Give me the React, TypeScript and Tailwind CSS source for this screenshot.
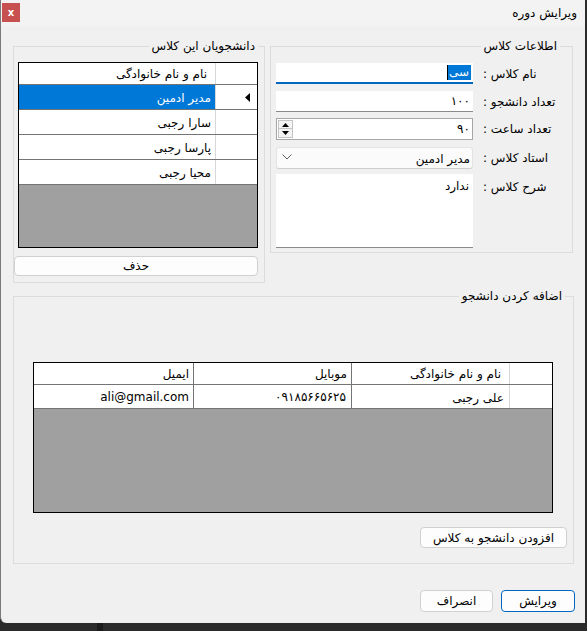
import React from "react";

type Cell = { text: string; w: string; pad: string; extra?: string };

function UpTri() {
  return (
    <svg width="7" height="4" viewBox="0 0 7 4" className="block">
      <polygon points="3.5,0 7,4 0,4" fill="#000" />
    </svg>
  );
}

function DownTri() {
  return (
    <svg width="7" height="4" viewBox="0 0 7 4" className="block">
      <polygon points="0,0 7,0 3.5,4" fill="#000" />
    </svg>
  );
}

function RowArrow() {
  return (
    <svg width="5" height="9" viewBox="0 0 5 9" className="block">
      <polygon points="5,0 5,9 0,4.5" fill="#000" />
    </svg>
  );
}

function Chevron() {
  return (
    <svg width="10" height="6" viewBox="0 0 10 6" className="block">
      <polyline points="0.5,0.5 5,5 9.5,0.5" fill="none" stroke="#5f5f5f" strokeWidth="1" />
    </svg>
  );
}

const students = ["مدیر ادمین", "سارا رجبی", "پارسا رجبی", "محیا رجبی"];

function ClassStudents() {
  return (
    <div className="relative w-[252px] h-[237px] border border-[#dcdcdc] flex flex-col">
      <span
        dir="rtl"
        className="absolute top-[-9px] right-[6px] bg-[#f0f0f0] px-[3px] leading-[16px] whitespace-nowrap"
      >
        دانشجویان این کلاس
      </span>
      <div className="ml-[4px] mt-[15px] w-[240px] h-[186px] border border-black bg-[#a0a0a0] flex flex-col">
        <div className="flex h-[22px] bg-white border-b border-[#747474]">
          <div dir="rtl" className="w-[197px] border-r border-[#d8d8d8] pr-[8px] flex items-center leading-none">
            نام و نام خانوادگی
          </div>
          <div className="w-[40px]" />
        </div>
        {students.map((s, i) => (
          <div key={s} className="flex h-[25px] bg-white border-b border-[#747474]">
            <div
              dir="rtl"
              className={
                i === 0
                  ? "w-[197px] border-r border-[#d8d8d8] pr-[4px] pt-[2px] flex items-center leading-none bg-[#0078d7] text-white"
                  : "w-[197px] border-r border-[#d8d8d8] pr-[4px] pt-[2px] flex items-center leading-none"
              }
            >
              {s}
            </div>
            <div className="w-[40px] flex items-center justify-end pr-[6px]">
              {i === 0 ? <RowArrow /> : null}
            </div>
          </div>
        ))}
      </div>
      <button className="mt-[8px] w-[244px] h-[20px] bg-[#fdfdfd] border border-[#d0d0d0] rounded-[4px] leading-none">
        حذف
      </button>
    </div>
  );
}

function FieldLabel({ children, top }: { children: React.ReactNode; top?: boolean }) {
  return (
    <div className={top ? "ml-[10px] pt-[4px] whitespace-nowrap" : "ml-[10px] flex items-center whitespace-nowrap"}>
      <span dir="rtl">{children}</span>
    </div>
  );
}

function ClassInfo() {
  return (
    <div className="relative w-[303px] h-[207px] border border-[#dcdcdc] flex flex-col">
      <span
        dir="rtl"
        className="absolute top-[-9px] right-[12px] bg-[#f0f0f0] px-[3px] leading-[16px] whitespace-nowrap"
      >
        اطلاعات کلاس
      </span>
      <div className="ml-[5px] mt-[16px] flex flex-col">
        <div className="flex h-[21px]">
          <div className="w-[197px] h-[21px] bg-white border-b-2 border-[#0067c0] flex items-center justify-end pr-[2px]">
            <span className="w-[1px] h-[15px] bg-black" />
            <span dir="rtl" className="w-[23px] bg-[#0078d7] text-white leading-[15px] h-[15px] pr-[2px]">
              سی
            </span>
          </div>
          <FieldLabel>نام کلاس :</FieldLabel>
        </div>
        <div className="flex h-[21px] mt-[7px]">
          <div dir="rtl" className="w-[197px] h-[21px] bg-white border-b border-[#8a8a8a] flex items-center pr-[3px] leading-none">
            ۱۰۰
          </div>
          <FieldLabel>تعداد دانشجو :</FieldLabel>
        </div>
        <div className="flex h-[22px] mt-[6px]">
          <div className="w-[197px] h-[22px] bg-white border border-[#a6a6a6] flex items-center justify-between">
            <div className="ml-[1px] w-[15px] h-[18px] flex flex-col">
              <div className="h-[9px] bg-[#f4f4f4] border border-[#c4c4c4] flex items-center justify-center">
                <UpTri />
              </div>
              <div className="h-[9px] bg-[#f4f4f4] border border-[#c4c4c4] border-t-0 flex items-center justify-center">
                <DownTri />
              </div>
            </div>
            <span dir="rtl" className="pr-[2px] leading-none">
              ۹۰
            </span>
          </div>
          <FieldLabel>تعداد ساعت :</FieldLabel>
        </div>
        <div className="flex h-[22px] mt-[7px]">
          <div className="w-[197px] h-[22px] bg-[#fbfbfb] border border-[#e3e3e3] border-b-[#cfcfcf] rounded-[3px] flex items-center justify-between">
            <div className="ml-[5px] mt-[-3px]">
              <Chevron />
            </div>
            <span dir="rtl" className="pr-[2px] leading-none mt-[2px]">
              مدیر ادمین
            </span>
          </div>
          <FieldLabel>استاد کلاس :</FieldLabel>
        </div>
        <div className="flex h-[74px] mt-[5px]">
          <div dir="rtl" className="w-[197px] h-[74px] bg-white border-b border-[#8a8a8a] pr-[4px] pt-[5px] leading-[14px]">
            ندارد
          </div>
          <FieldLabel top>شرح کلاس :</FieldLabel>
        </div>
      </div>
    </div>
  );
}

const headCells: Cell[] = [
  { text: "ایمیل", w: "w-[160px]", pad: "pr-[4px]" },
  { text: "موبایل", w: "w-[158px]", pad: "pr-[4px]" },
  { text: "نام و نام خانوادگی", w: "w-[158px]", pad: "pr-[8px]" },
];

const dataCells: Cell[] = [
  { text: "ali@gmail.com", w: "w-[160px]", pad: "pr-[4px]" },
  { text: "۰۹۱۸۵۶۶۵۶۲۵", w: "w-[158px]", pad: "pr-[5px]" },
  { text: "علی رجبی", w: "w-[158px]", pad: "pr-[5px]", extra: "pt-[3px]" },
];

function TableRow({ cells, h }: { cells: Cell[]; h: string }) {
  return (
    <div className={`flex ${h} bg-white border-b border-[#747474]`}>
      <div dir="rtl" className={`${cells[0].w} ${cells[0].pad} border-r border-[#747474] flex items-center leading-none`}>
        {cells[0].text}
      </div>
      <div dir="rtl" className={`${cells[1].w} ${cells[1].pad} border-r border-[#747474] flex items-center leading-none`}>
        {cells[1].text}
      </div>
      <div
        dir="rtl"
        className={`${cells[2].w} ${cells[2].pad} ${cells[2].extra ?? ""} border-r border-[#d8d8d8] flex items-center leading-none`}
      >
        {cells[2].text}
      </div>
      <div className="w-[39px]" />
    </div>
  );
}

function AddStudent() {
  return (
    <div className="relative w-[561px] h-[268px] border border-[#dcdcdc] flex flex-col">
      <span
        dir="rtl"
        className="absolute top-[-9px] right-[8px] bg-[#f0f0f0] px-[3px] leading-[16px] whitespace-nowrap"
      >
        اضافه کردن دانشجو
      </span>
      <div className="ml-[19px] mt-[65px] w-[520px] h-[151px] border border-black bg-[#a0a0a0] flex flex-col">
        <TableRow cells={headCells} h="h-[22px]" />
        <TableRow cells={dataCells} h="h-[24px]" />
      </div>
      <div className="flex justify-end mr-[6px] mt-[14px]">
        <button className="w-[147px] h-[21px] bg-[#fdfdfd] border border-[#d0d0d0] rounded-[4px] leading-none">
          افزودن دانشجو به کلاس
        </button>
      </div>
    </div>
  );
}

export default function App() {
  return (
    <div className="relative w-[587px] h-[631px] bg-[#2b2b2b] overflow-hidden text-[12px] text-black font-['DejaVu_Sans','Noto_Sans',sans-serif]">
      <div className="w-[585px] h-[623px] bg-[#f0f0f0] border-l border-[#7a7a7a] rounded-bl-[6px] flex flex-col">
        {/* title bar */}
        <div className="h-[26px] bg-[#f3f3f3] flex items-start justify-between">
          <div className="ml-[1px] mt-[3px] w-[18px] h-[19px] bg-[#c75050] flex items-center justify-center text-white text-[10px] font-bold leading-none">
            x
          </div>
          <span dir="rtl" className="mr-[8px] mt-[6px] leading-[14px] text-[12px]">
            ویرایش دوره
          </span>
        </div>

        {/* content */}
        <div className="flex mt-[20px] ml-[12px] items-start">
          <ClassStudents />
          <div className="ml-[5px]">
            <ClassInfo />
          </div>
        </div>
        <div className="ml-[12px] mt-[13px]">
          <AddStudent />
        </div>

        {/* dialog buttons */}
        <div className="flex justify-end gap-[8px] mr-[10px] mt-[26px]">
          <button className="w-[73px] h-[22px] bg-[#fdfdfd] border border-[#d0d0d0] rounded-[4px] leading-none">
            انصراف
          </button>
          <button className="w-[74px] h-[22px] bg-[#fdfdfd] border border-[#0067c0] rounded-[4px] leading-none">
            ویرایش
          </button>
        </div>
      </div>

      {/* desktop strip under the window */}
      <div className="flex h-[8px] items-stretch">
        <div className="w-[97px]" />
        <div className="w-[6px] bg-[#1b1b1b]" />
      </div>
    </div>
  );
}
